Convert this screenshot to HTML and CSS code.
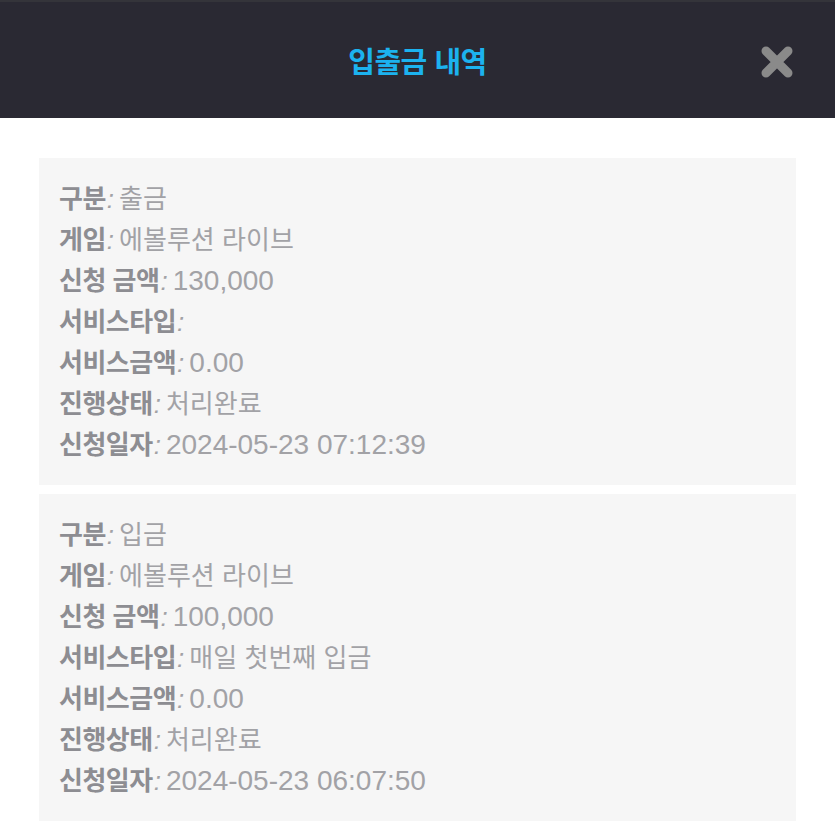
FILE: index.html
```html
<!DOCTYPE html>
<html lang="ko">
<head>
<meta charset="utf-8">
<link rel="stylesheet" href="styles.css">
</head>
<body>
<header class="header">
  <h1 class="title">입출금 내역</h1>
  <button class="close" aria-label="close">
    <svg width="34" height="34" viewBox="0 0 34 34"><path d="M6 6 L28 28 M28 6 L6 28" stroke="#8a8a8a" stroke-width="9" stroke-linecap="round"/></svg>
  </button>
</header>
<main class="list">
  <section class="card">
    <div class="row"><b class="label">구분</b><i class="colon">:</i><span class="value">출금</span></div>
    <div class="row"><b class="label">게임</b><i class="colon">:</i><span class="value">에볼루션 라이브</span></div>
    <div class="row"><b class="label">신청 금액</b><i class="colon">:</i><span class="value num">130,000</span></div>
    <div class="row"><b class="label">서비스타입</b><i class="colon">:</i><span class="value"></span></div>
    <div class="row"><b class="label">서비스금액</b><i class="colon">:</i><span class="value num">0.00</span></div>
    <div class="row"><b class="label">진행상태</b><i class="colon">:</i><span class="value">처리완료</span></div>
    <div class="row"><b class="label">신청일자</b><i class="colon">:</i><span class="value num">2024-05-23 07:12:39</span></div>
  </section>
  <section class="card">
    <div class="row"><b class="label">구분</b><i class="colon">:</i><span class="value">입금</span></div>
    <div class="row"><b class="label">게임</b><i class="colon">:</i><span class="value">에볼루션 라이브</span></div>
    <div class="row"><b class="label">신청 금액</b><i class="colon">:</i><span class="value num">100,000</span></div>
    <div class="row"><b class="label">서비스타입</b><i class="colon">:</i><span class="value">매일 첫번째 입금</span></div>
    <div class="row"><b class="label">서비스금액</b><i class="colon">:</i><span class="value num">0.00</span></div>
    <div class="row"><b class="label">진행상태</b><i class="colon">:</i><span class="value">처리완료</span></div>
    <div class="row"><b class="label">신청일자</b><i class="colon">:</i><span class="value num">2024-05-23 06:07:50</span></div>
  </section>
</main>
</body>
</html>
```
FILE: styles.css
```css
html, body {
  margin: 0;
  padding: 0;
  background: #ffffff;
  font-family: "Liberation Sans", "Noto Sans CJK KR", sans-serif;
}
.header {
  position: relative;
  height: 118px;
  background: #2a2933;
  border-top: 2px solid #34343a;
  box-sizing: border-box;
  display: flex;
  align-items: center;
  justify-content: center;
}
.title {
  margin: 0;
  font-family: "Noto Sans CJK KR", sans-serif;
  font-size: 29px;
  font-weight: 700;
  color: #1cb2ef;
  letter-spacing: -0.5px;
}
.close {
  position: absolute;
  right: 41px;
  top: 43px;
  width: 34px;
  height: 34px;
  padding: 0;
  border: 0;
  background: none;
}
.close svg { display: block; }
.list {
  padding: 40px 39px 0;
  display: flex;
  flex-direction: column;
  gap: 9px;
}
.card {
  background: #f6f6f6;
  padding: 18px 20px 22px;
}
.row {
  height: 41px;
  font-size: 26px;
  line-height: 41px;
  color: #a2a2a6;
  white-space: nowrap;
}
.label {
  font-family: "Noto Sans CJK KR", sans-serif;
  font-weight: 700;
  color: #8d8d92;
  letter-spacing: -0.5px;
}
.colon {
  font-style: italic;
  color: #a2a2a6;
  margin-left: 1px;
}
.value {
  font-family: "Noto Sans CJK KR", sans-serif;
  font-size: 26px;
  margin-left: 5px;
}
.value.num {
  font-family: "Liberation Sans", sans-serif;
  font-size: 28px;
}
```
